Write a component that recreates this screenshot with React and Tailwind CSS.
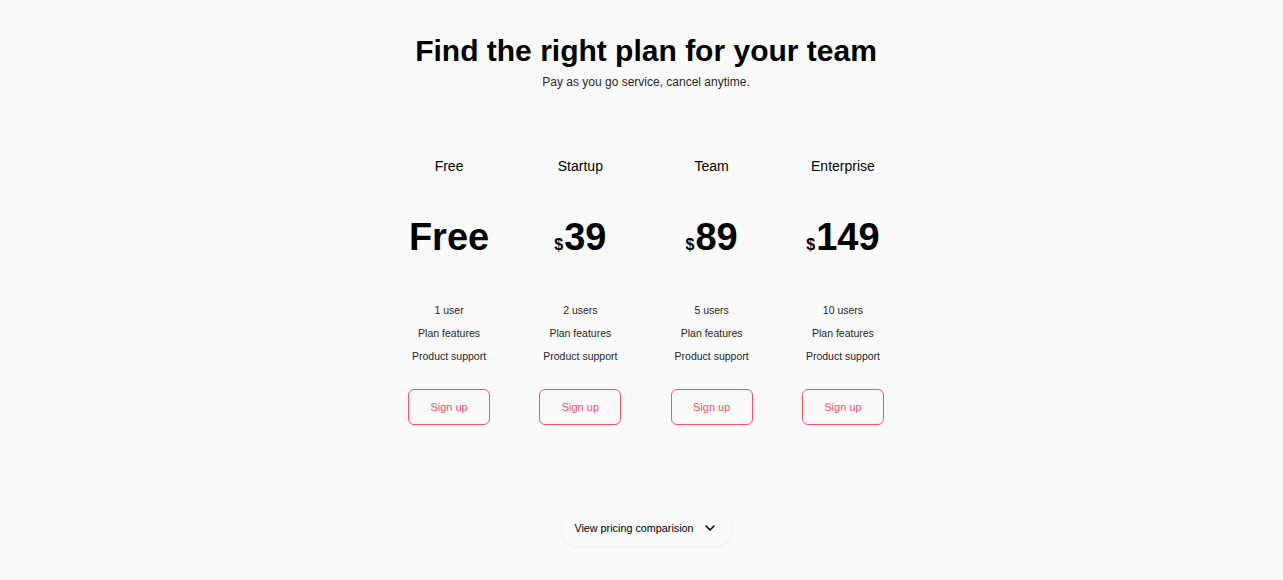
import { ChevronDown } from "lucide-react";

const plans = [
  { name: "Free", price: null, users: "1 user" },
  { name: "Startup", price: "39", users: "2 users" },
  { name: "Team", price: "89", users: "5 users" },
  { name: "Enterprise", price: "149", users: "10 users" },
];

function PlanColumn({ plan }) {
  return (
    <div className="flex w-[131.3px] flex-col items-center">
      <h3 className="text-[14px] leading-[20px] text-black">{plan.name}</h3>
      <div className="mt-[46px] flex h-[30px] items-baseline justify-center font-bold text-black">
        {plan.price ? (
          <>
            <span className="mr-px text-[16px]">$</span>
            <span className="text-[38px] leading-[30px]">{plan.price}</span>
          </>
        ) : (
          <span className="text-[38px] leading-[30px]">Free</span>
        )}
      </div>
      <ul className="mt-[47px] flex flex-col items-center text-[10.5px] leading-[23px] text-neutral-800">
        <li>{plan.users}</li>
        <li>Plan features</li>
        <li>Product support</li>
      </ul>
      <button
        type="button"
        className="mt-[21px] h-[36px] w-[82px] rounded-[6px] border border-[#fb4f6c] text-[11px] font-medium text-[#f6506d]"
      >
        Sign up
      </button>
    </div>
  );
}

function App() {
  return (
    <div
      className="min-h-[580px] bg-[#fafafa] pl-[9px]"
      style={{ fontFamily: '"Liberation Sans", Arial, sans-serif' }}
    >
      <div className="flex flex-col items-center pt-[33px]">
        <h1 className="text-[30px] font-bold leading-[36px] text-black">Find the right plan for your team</h1>
        <p className="mt-[3px] text-[12px] leading-[20px] text-neutral-800">Pay as you go service, cancel anytime.</p>

        <div className="mt-[64px] flex">
          {plans.map((plan) => (
            <PlanColumn key={plan.name} plan={plan} />
          ))}
        </div>

        <button
          type="button"
          className="mt-[85px] flex h-[36px] w-[171px] items-center justify-center gap-[8px] rounded-full bg-[#fafafa] text-[10.8px] text-black shadow-[0_1px_4px_rgba(0,0,0,0.06)]"
        >
          View pricing comparision
          <ChevronDown size={16} strokeWidth={2.3} />
        </button>
      </div>
    </div>
  );
}

export default App;
